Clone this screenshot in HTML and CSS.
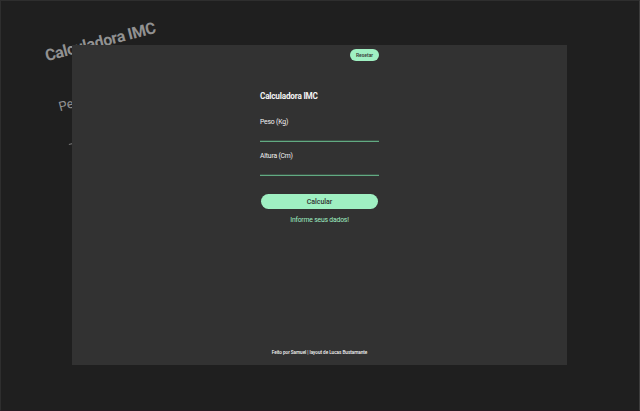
FILE: index.html
```html
<!DOCTYPE html>
<html lang="pt-BR">
<head>
<meta charset="utf-8">
<title>Calculadora IMC</title>
<link rel="stylesheet" href="styles.css">
</head>
<body>
<div class="backdrop">
  <div class="backdrop-title">Calculadora IMC</div>
  <div class="backdrop-label">Peso (Kg)</div>
  <div class="backdrop-line"></div>
</div>
<main class="panel">
  <section class="calculator">
    <button class="reset" type="button">Resetar</button>
    <h1 class="title">Calculadora IMC</h1>
    <label class="field"><span class="label">Peso (Kg)</span><input class="input" type="text"></label>
    <label class="field"><span class="label">Altura (Cm)</span><input class="input" type="text"></label>
    <button class="calculate" type="button">Calcular</button>
    <p class="message">Informe seus dados!</p>
  </section>
  <footer class="footer">Feito por Samuel | layout de Lucas Bustamante</footer>
</main>
</body>
</html>
```
FILE: styles.css
```css
* { box-sizing: border-box; }

body {
  margin: 0;
  height: 411px;
  overflow: hidden;
  position: relative;
  padding: 44px 0 0 71px;
  background: #1f1f1f;
  border: 1px solid #2e2e2e;
  border-right-color: #3c3c3c;
  border-bottom-color: #281b21;
  font-family: Roboto, "Liberation Sans", sans-serif;
  color: #f4f4f4;
}

.backdrop {
  position: absolute;
  inset: 0;
  color: #919191;
}

.backdrop-title,
.backdrop-label,
.backdrop-line {
  position: absolute;
  transform: rotate(-14.5deg);
  transform-origin: 0 100%;
  white-space: nowrap;
}

.backdrop-title {
  left: 47px;
  top: 45px;
  font-size: 16px;
  line-height: 20px;
  font-weight: 700;
  letter-spacing: -0.35px;
}

.backdrop-label {
  left: 60px;
  top: 98px;
  font-size: 13px;
  line-height: 16px;
}

.backdrop-line {
  left: 68px;
  top: 143px;
  width: 230px;
  height: 1px;
  background: #777;
}

.panel {
  position: relative;
  width: 495px;
  height: 320px;
  display: flex;
  flex-direction: column;
  align-items: center;
  justify-content: space-between;
  background: #323232;
}

.calculator {
  width: 119px;
  padding-top: 4px;
  display: flex;
  flex-direction: column;
}

.reset,
.calculate {
  border: 0;
  padding: 0;
  border-radius: 8px;
  background: #9ff0c2;
  color: #323232;
  font-family: inherit;
  font-weight: 500;
}

.reset {
  align-self: flex-end;
  width: 29px;
  height: 12px;
  font-size: 5px;
  line-height: 12px;
}

.title {
  margin: 29px 0 0;
  font-size: 8.2px;
  line-height: 12px;
  font-weight: 700;
  letter-spacing: -0.2px;
  white-space: nowrap;
}

.field {
  display: flex;
  flex-direction: column;
  height: 26px;
  margin-top: 8px;
}

.title + .field { margin-top: 14px; }

.label {
  font-size: 6.8px;
  line-height: 12px;
  letter-spacing: -0.17px;
}

.input {
  width: 100%;
  height: 14px;
  padding: 0;
  border: 0;
  border-bottom: 1px solid #62aa82;
  border-radius: 0;
  box-shadow: inset 0 -1px 0 #3b5145;
  background: transparent;
  color: inherit;
  font: inherit;
}

.calculate {
  align-self: center;
  width: 117px;
  height: 15px;
  margin-top: 18px;
  font-size: 7px;
  line-height: 16px;
}

.message {
  margin: 5px 0 0;
  text-align: center;
  color: #9ff0c2;
  font-size: 6.8px;
  line-height: 12px;
  letter-spacing: -0.18px;
}

.footer {
  padding-bottom: 8px;
  font-size: 4.7px;
  line-height: 8px;
  letter-spacing: -0.06px;
  font-weight: 500;
  white-space: nowrap;
}
```
